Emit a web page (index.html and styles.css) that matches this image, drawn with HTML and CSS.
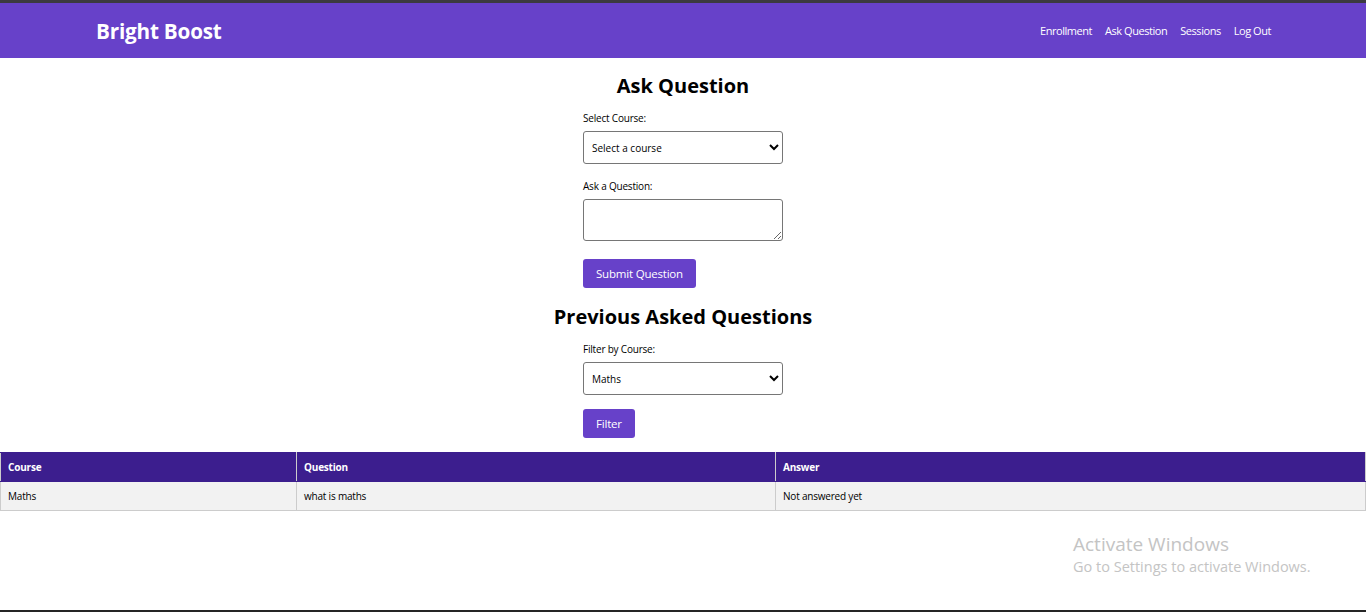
FILE: index.html
```html
<!DOCTYPE html>
<html lang="en">
<head>
<meta charset="utf-8">
<title>Bright Boost - Ask Question</title>
<link rel="stylesheet" href="styles.css">
</head>
<body>
<div class="topstrip"></div>
<header class="header">
  <div class="logo">Bright Boost</div>
  <nav class="nav">
    <a href="#">Enrollment</a>
    <a href="#">Ask Question</a>
    <a href="#">Sessions</a>
    <a href="#">Log Out</a>
  </nav>
</header>
<main class="main">
  <h2 class="title">Ask Question</h2>
  <form class="form">
    <label class="label">Select Course:</label>
    <select class="select"><option>Select a course</option></select>
    <label class="label">Ask a Question:</label>
    <textarea class="textarea"></textarea>
    <div><button type="button" class="btn">Submit Question</button></div>
  </form>
  <h2 class="title title2">Previous Asked Questions</h2>
  <form class="form">
    <label class="label">Filter by Course:</label>
    <select class="select select-filter"><option>Maths</option></select>
    <div><button type="button" class="btn">Filter</button></div>
  </form>
  <table class="table">
    <thead>
      <tr><th class="c1">Course</th><th class="c2">Question</th><th class="c3">Answer</th></tr>
    </thead>
    <tbody>
      <tr><td>Maths</td><td>what is maths</td><td>Not answered yet</td></tr>
    </tbody>
  </table>
</main>
<div class="watermark">
  <div class="wm1">Activate Windows</div>
  <div class="wm2">Go to Settings to activate Windows.</div>
</div>
<div class="taskbar"></div>
</body>
</html>
```
FILE: styles.css
```css
* { box-sizing: border-box; }
html, body { margin: 0; padding: 0; background: #fff; }
body {
  font-family: "Open Sans", "Noto Sans", sans-serif;
  color: #000;
  height: 612px;
  overflow: hidden;
  position: relative;
}
.topstrip { height: 3px; background: #3b3a40; }
.header {
  height: 55px;
  background: #6741c9;
  display: flex;
  align-items: center;
  justify-content: space-between;
  padding: 0 95px 0 96px;
}
.logo { color: #fff; font-weight: 700; font-size: 20.7px; letter-spacing: -0.2px; }
.nav { display: flex; gap: 13px; }
.nav a { color: #fff; text-decoration: none; font-size: 11px; letter-spacing: -0.45px; }
.main { display: flex; flex-direction: column; align-items: center; }
.title { margin: 15px 0 12px; font-size: 20px; font-weight: 700; line-height: 26px; }
.title2 { margin-top: 16px; margin-bottom: 12px; }
.form { width: 200px; display: flex; flex-direction: column; }
.label { font-size: 10px; line-height: 14px; margin-bottom: 6px; letter-spacing: -0.2px; }
.select {
  width: 200px; height: 33px; font-family: inherit; font-size: 10px;
  border: 1px solid #767676; border-radius: 3px; padding: 0 4px; background: #fff;
  margin-bottom: 15px; color: #000;
}
.select-filter { margin-bottom: 14px; }
.textarea {
  width: 200px; height: 42px; border: 1px solid #767676; border-radius: 3px;
  margin-bottom: 18px; resize: vertical; font-family: inherit;
}
.btn {
  background: #6741c9; color: #fff; border: none; border-radius: 3px;
  font-family: inherit; font-size: 11.5px; height: 29px; padding: 0 13px; letter-spacing: -0.2px;
}
.table {
  width: 100%; border-collapse: collapse; margin-top: 14px; font-size: 10px;
  border: 1px solid #ccc;
}
.table th, .table td { text-align: left; padding: 0 7px; border: 1px solid #ccc; letter-spacing: -0.2px; }
.table th { background: #3c1e8e; color: #fff; height: 29px; font-weight: 700; border-color: #3c1e8e #ccc #3c1e8e #ccc; }
.table td { background: #f2f2f2; height: 29px; }
.c1 { width: 296px; }
.c2 { width: 479px; }
.watermark { position: absolute; left: 1073px; top: 532px; color: #c4c4c4; }
.wm1 { font-size: 19px; line-height: 24px; }
.wm2 { font-size: 14.5px; line-height: 21px; }
.taskbar { position: absolute; left: 0; right: 0; bottom: 0; height: 2px; background: #252525; }
```
